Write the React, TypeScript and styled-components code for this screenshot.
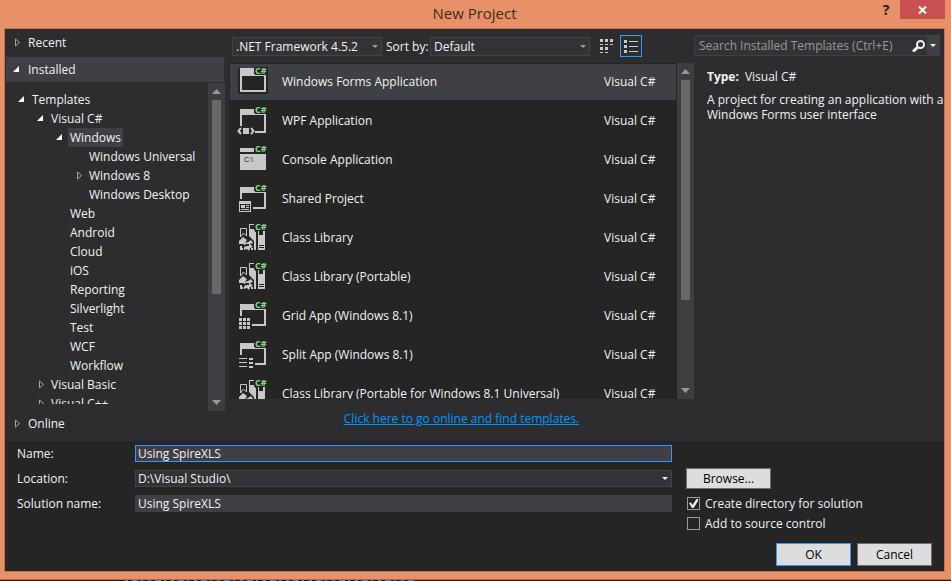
import React from "react";
import styled, { createGlobalStyle, css } from "styled-components";

const GlobalStyle = createGlobalStyle`
  *, *::before, *::after { box-sizing: border-box; }
  body { margin: 0; background: #1e1e1e; }
  body, button, input, select {
    font-family: "Open Sans", "Noto Sans", sans-serif;
    font-size: 12px;
    line-height: 15px;
    color: #f1f1f1;
  }
  button { margin: 0; padding: 0; border: 0; background: none; text-align: left; }
  svg { display: block; flex: none; }
`;

/* ---------- window frame ---------- */

const Screen = styled.div`
  display: flex;
  flex-direction: column;
  height: 100vh;
  min-height: 480px;
  min-width: 800px;
`;

const Frame = styled.main`
  flex: 1;
  min-height: 0;
  display: flex;
  flex-direction: column;
  padding: 0 6px 7px 4px;
  background: #e89168;
  border-bottom: 1px solid #b5694c;
`;

const TitleBar = styled.header`
  display: grid;
  grid-template-columns: 1fr auto 1fr;
  height: 28px;
`;

const Title = styled.h1`
  grid-column: 2;
  margin: 0;
  font-size: 15px;
  font-weight: 400;
  line-height: 27px;
  color: #3d2a21;
`;

const Caption = styled.div`
  display: flex;
  justify-content: flex-end;
`;

const HelpButton = styled.button`
  width: 28px;
  height: 19px;
  color: #1f1c1a;
  font-size: 14px;
  font-weight: 700;
  text-align: center;
`;

const CloseButton = styled.button`
  display: grid;
  place-items: center;
  width: 45px;
  height: 19px;
  background: #c75050;
`;

const Client = styled.div`
  flex: 1;
  min-height: 0;
  display: flex;
  flex-direction: column;
  border: 1px solid #bd7456;
  background: #2d2d30;
`;

const Workspace = styled.div`
  flex: 1;
  min-height: 0;
  display: grid;
  grid-template-columns: 220px minmax(0, 1fr) 250px;
  grid-template-rows: minmax(0, 1fr);
`;

/* ---------- scrollbar ---------- */

const Track = styled.div`
  flex: none;
  width: 17px;
  display: flex;
  flex-direction: column;
  align-items: center;
  gap: 6px;
  padding: 6px 0;
  background: #3e3e42;
`;

const ThumbLane = styled.div`
  flex: 1;
  width: 9px;
`;

const Thumb = styled.div<{ $size: number }>`
  height: ${(p) => p.$size}%;
  background: #686868;
`;

function ScrollBar({ size }: { size: number }) {
  return (
    <Track aria-hidden="true">
      <svg width="9" height="5"><path d="M0 5 4.500 0 9 5Z" fill="#999" /></svg>
      <ThumbLane><Thumb $size={size} /></ThumbLane>
      <svg width="9" height="5"><path d="M0 0 4.500 5 9 0Z" fill="#999" /></svg>
    </Track>
  );
}

/* ---------- sidebar ---------- */

const Sidebar = styled.nav`
  display: flex;
  flex-direction: column;
  min-height: 0;
  padding-bottom: 5px;
`;

const Section = styled.button<{ $active?: boolean }>`
  flex: none;
  display: flex;
  align-items: center;
  gap: 3px;
  height: ${(p) => (p.$active ? 25 : 28)}px;
  margin: 0 1px;
  padding: 0 0 ${(p) => (p.$active ? 0 : 1)}px 7px;
  background: ${(p) => (p.$active ? "#3f3f46" : "transparent")};
`;

const OnlineSection = styled(Section)`
  height: 25px;
  padding-bottom: 0;
`;

const TreePane = styled.div`
  flex: 1;
  min-height: 0;
  display: flex;
  margin-top: 1px;
`;

const TreeView = styled.ul`
  flex: 1;
  min-width: 0;
  margin: 0 0 7px;
  padding: 7px 0 0;
  list-style: none;
  overflow: hidden;
`;

const TreeItem = styled.li<{ $level: number }>`
  display: flex;
  align-items: center;
  height: 19px;
  padding-left: ${(p) => 13 + p.$level * 19}px;
`;

const TreeLabel = styled.button<{ $selected?: boolean }>`
  height: 19px;
  padding: 0 2px;
  white-space: nowrap;
  background: ${(p) => (p.$selected ? "#3f3f46" : "transparent")};
`;

const ArrowSlot = styled.span`
  flex: none;
  width: 12px;
`;

type Arrow = "open" | "closed" | undefined;

function Expander({ state }: { state: Arrow }) {
  return (
    <ArrowSlot>
      {state === "open" && (
        <svg width="12" height="9"><path d="M0 7H6V1Z" fill="#fff" /></svg>
      )}
      {state === "closed" && (
        <svg width="12" height="9">
          <path d="M2.500 1V8L6.500 4.500Z" fill="none" stroke="#a8a8a8" />
        </svg>
      )}
    </ArrowSlot>
  );
}

const tree: { text: string; level: number; arrow?: Arrow; selected?: boolean }[] = [
  { text: "Templates", level: 0, arrow: "open" },
  { text: "Visual C#", level: 1, arrow: "open" },
  { text: "Windows", level: 2, arrow: "open", selected: true },
  { text: "Windows Universal", level: 3 },
  { text: "Windows 8", level: 3, arrow: "closed" },
  { text: "Windows Desktop", level: 3 },
  { text: "Web", level: 2 },
  { text: "Android", level: 2 },
  { text: "Cloud", level: 2 },
  { text: "iOS", level: 2 },
  { text: "Reporting", level: 2 },
  { text: "Silverlight", level: 2 },
  { text: "Test", level: 2 },
  { text: "WCF", level: 2 },
  { text: "Workflow", level: 2 },
  { text: "Visual Basic", level: 1, arrow: "closed" },
  { text: "Visual C++", level: 1, arrow: "closed" },
];

/* ---------- template list ---------- */

const Center = styled.section`
  display: flex;
  flex-direction: column;
  min-height: 0;
  padding-left: 4px;
`;

const Toolbar = styled.div`
  flex: none;
  display: flex;
  align-items: center;
  height: 34px;
  padding-left: 3px;
`;

const SelectBox = styled.span<{ $width?: number }>`
  display: grid;
  align-items: center;
  width: ${(p) => (p.$width ? `${p.$width}px` : "100%")};
  & > * { grid-area: 1 / 1; }
  & > svg { justify-self: end; margin-right: 4px; pointer-events: none; }
`;

const Select = styled.select<{ $tall?: boolean }>`
  appearance: none;
  width: 100%;
  height: ${(p) => (p.$tall ? 19 : 17)}px;
  padding: 0 16px 0 ${(p) => (p.$tall ? 3 : 2)}px;
  border: 1px solid #434346;
  border-radius: 0;
  background: #333337;
`;

function Chevron({ color }: { color: string }) {
  return <svg width="6" height="3"><path d="M0 0H6L3 3Z" fill={color} /></svg>;
}

const SortLabel = styled.label`
  width: 44px;
  margin-left: 4px;
  white-space: nowrap;
`;

const ViewButtons = styled.div`
  display: flex;
  gap: 3px;
  margin-left: 5px;
`;

const ViewButton = styled.button<{ $active?: boolean }>`
  display: grid;
  place-items: center;
  width: 22px;
  height: 22px;
  border: 1px solid ${(p) => (p.$active ? "#3399ff" : "transparent")};
`;

const ListPane = styled.div`
  flex: 1;
  min-height: 0;
  display: flex;
`;

const List = styled.ul`
  flex: 1;
  min-width: 0;
  display: flex;
  flex-direction: column;
  gap: 3px;
  margin: 0;
  padding: 1px;
  list-style: none;
  overflow: hidden;
  background: #252526;
`;

const Row = styled.button<{ $selected?: boolean }>`
  display: grid;
  grid-template-columns: 30px minmax(0, 1fr) 72px;
  column-gap: 14px;
  align-items: center;
  width: 100%;
  height: 36px;
  padding: 0 0 2px 8px;
  background: ${(p) => (p.$selected ? "#3f3f46" : "transparent")};
  white-space: nowrap;
`;

const LinkBar = styled.div`
  flex: none;
  height: 42px;
  padding-top: 12px;
  text-align: center;
`;

const OnlineLink = styled.a`
  color: #0097fb;
  text-decoration: underline;
`;

const G = "#c8c8c8";
const D = "#252526";

type Kind = "forms" | "wpf" | "console" | "shared" | "library" | "grid" | "split";

function Glyph({ kind }: { kind: Kind }) {
  switch (kind) {
    case "forms":
      return (
        <>
          <path d="M0 1H17V0H30V27H0Z" fill={D} />
          <path d="M2 1H28V25H2ZM4 9V23H26V9Z" fill={G} fillRule="evenodd" />
        </>
      );
    case "wpf":
      return (
        <>
          <path d="M2 3H28V27H17V25H26V9H4V20H2Z" fill={G} />
          <path d="M5 22H11V28H5Z" fill={G} />
          <path
            d="M3 22 0.500 25 3 28M13 22 15.500 25 13 28"
            fill="none"
            stroke={G}
            strokeWidth="2"
            shapeRendering="geometricPrecision"
          />
        </>
      );
    case "console":
      return (
        <>
          <path d="M2 3H28V7H2ZM2 9H28V25H2Z" fill={G} />
          <text x="6" y="17" fontSize="7" fontFamily="Liberation Sans, sans-serif" fill="#111">C:\</text>
        </>
      );
    case "shared":
      return (
        <>
          <path d="M2 3H28V25H15V23H26V9H4V15H2Z" fill={G} />
          <path d="M1 17H13V28H1ZM2 20V27H12V20ZM3 21H7V24H3ZM8 21H11V22H8ZM8 23H11V24H8ZM3 25H11V26H3Z" fill={G} fillRule="evenodd" />
        </>
      );
    case "grid":
      return (
        <>
          <path d="M2 3H28V25H14V23H26V9H4V15H2Z" fill={G} />
          {[17, 21, 25].map((y) => (
            <path key={y} d={`M1 ${y}h3v3h-3ZM5 ${y}h3v3h-3ZM9 ${y}h3v3h-3Z`} fill={G} />
          ))}
        </>
      );
    case "split":
      return (
        <>
          <path d="M2 3H28V25H17V23H26V9H4V15H2Z" fill={G} />
          {[18, 22, 26].map((y) => (
            <path key={y} d={`M1 ${y}h8v1h-8ZM11 ${y}h4v2h-4Z`} fill={G} />
          ))}
        </>
      );
    case "library":
      return (
        <>
          <path d="M2.500 14V5.500H8.500V13L5.500 10Z" fill="none" stroke={G} />
          <path d="M11 1H17V2H12V6H17V9H18V27H16V18L11 13Z" fill={G} />
          <path d="M20 12H27V27H20ZM21 22V23H26V22ZM21 24V25H26V24Z" fill={G} fillRule="evenodd" />
          <path d="M20 8H21V12H20ZM25 8H27V12H25Z" fill={G} />
          <path d="M5 14 9 17 7 20 10 19 13 17 15 20 12 21 15 24 12 25 11 28 9 26 6 27 6 24 9 23 5 21 1 21 1 18Z" fill={G} />
          <path d="M7 21H11V23H8Z" fill={D} />
          <path d="M2 23H4V25H5V27H2ZM13 25H15V27H13Z" fill={G} />
        </>
      );
  }
}

function TemplateIcon({ kind }: { kind: Kind }) {
  return (
    <svg width="30" height="28" viewBox="0 0 30 28" shapeRendering={kind === "library" ? undefined : "crispEdges"} overflow="visible">
      <Glyph kind={kind} />
      <path d="M17 0H30V7H28V8H17L16 7V1Z" fill={D} />
      <text x="17" y="7" fontSize="9" fontWeight="700" fontFamily="Open Sans, sans-serif" fill="#86d986">C#</text>
    </svg>
  );
}

const templates: { name: string; kind: Kind }[] = [
  { name: "Windows Forms Application", kind: "forms" },
  { name: "WPF Application", kind: "wpf" },
  { name: "Console Application", kind: "console" },
  { name: "Shared Project", kind: "shared" },
  { name: "Class Library", kind: "library" },
  { name: "Class Library (Portable)", kind: "library" },
  { name: "Grid App (Windows 8.1)", kind: "grid" },
  { name: "Split App (Windows 8.1)", kind: "split" },
  { name: "Class Library (Portable for Windows 8.1 Universal)", kind: "library" },
];

/* ---------- details ---------- */

const Details = styled.aside`
  padding-top: 6px;
`;

const SearchBox = styled.div`
  display: flex;
  align-items: center;
  height: 21px;
  margin-right: 4px;
  border: 1px solid #3f3f46;
  background: #333337;
`;

const SearchInput = styled.input`
  flex: 1;
  min-width: 0;
  height: 19px;
  padding: 0 4px;
  border: 0;
  outline: 0;
  background: transparent;
  &::placeholder { color: #999; opacity: 1; }
`;

const SearchGo = styled.button`
  width: 15px;
`;

const SearchMenu = styled.button`
  display: grid;
  place-items: center;
  align-self: stretch;
  width: 12px;
  background: #3f3f46;
`;

const Info = styled.div`
  padding: 13px 0 0 13px;
  p { margin: 0 0 8px; }
  strong { margin-right: 6px; }
`;

/* ---------- form ---------- */

const Form = styled.form`
  flex: none;
  padding: 0 12px 5px;
  background: #252526;
`;

const Fields = styled.div`
  display: grid;
  grid-template-columns: 118px minmax(0, 1fr) 260px;
  grid-template-rows: 25px 25px 25px 15px;
  align-items: center;
`;

const FieldLabel = styled.label`
  grid-column: 1;
`;

const Side = styled.div<{ $row: number }>`
  grid-column: 3;
  grid-row: ${(p) => p.$row};
  padding-left: 14px;
`;

const fieldLook = css`
  width: 100%;
  height: 17px;
  padding: 0 2px;
  outline: 0;
  background: #3f3f46;
`;

const TextField = styled.input<{ $focused?: boolean }>`
  ${fieldLook}
  border: 1px solid ${(p) => (p.$focused ? "#3399ff" : "#3f3f46")};
`;

const PushButton = styled.button<{ $primary?: boolean; $wide?: boolean }>`
  display: block;
  width: ${(p) => (p.$wide ? 85 : 75)}px;
  height: ${(p) => (p.$wide ? 21 : 23)}px;
  border: 1px solid ${(p) => (p.$primary ? "#3399ff" : "#707070")};
  background: #dddddd;
  color: #000;
  line-height: 19px;
  text-align: center;
`;

const CheckLabel = styled.label`
  display: flex;
  align-items: center;
  gap: 5px;
  margin-left: 1px;
`;

const CheckCell = styled.span`
  display: grid;
  place-items: center;
  & > * { grid-area: 1 / 1; }
  & > svg { pointer-events: none; visibility: hidden; }
  & > input:checked + svg { visibility: visible; }
`;

const CheckInput = styled.input`
  appearance: none;
  width: 13px;
  height: 13px;
  margin: 0;
  border: 1px solid #999;
  background: #252526;
`;

function Check({ label, on }: { label: string; on?: boolean }) {
  return (
    <CheckLabel>
      <CheckCell>
        <CheckInput type="checkbox" defaultChecked={on} />
        <svg width="9" height="9"><path d="M0 4 2 3.500 3.500 6 7.500 0H9V2L4.500 9H3Z" fill="#f1f1f1" /></svg>
      </CheckCell>
      {label}
    </CheckLabel>
  );
}

const Actions = styled.div`
  display: flex;
  justify-content: flex-end;
  gap: 6px;
  margin-top: 12px;
`;

const DesktopEdge = styled.div`
  flex: none;
  height: 1px;
  padding-left: 125px;
  background: #1e1e1e;
`;

export default function App() {
  return (
    <Screen>
      <GlobalStyle />
      <Frame>
        <TitleBar>
          <Title>New Project</Title>
          <Caption>
            <HelpButton type="button" aria-label="Help">?</HelpButton>
            <CloseButton type="button" aria-label="Close">
              <svg width="9" height="8"><path d="M1 0.500 8 7.500M8 0.500 1 7.500" stroke="#fff" strokeWidth="2" /></svg>
            </CloseButton>
          </Caption>
        </TitleBar>
        <Client>
          <Workspace>
            <Sidebar>
              <Section type="button"><Expander state="closed" />Recent</Section>
              <Section type="button" $active><Expander state="open" />Installed</Section>
              <TreePane>
                <TreeView>
                  {tree.map((t) => (
                    <TreeItem key={t.text} $level={t.level}>
                      <Expander state={t.arrow} />
                      <TreeLabel type="button" $selected={t.selected}>{t.text}</TreeLabel>
                    </TreeItem>
                  ))}
                </TreeView>
                <ScrollBar size={66} />
              </TreePane>
              <OnlineSection type="button"><Expander state="closed" />Online</OnlineSection>
            </Sidebar>

            <Center>
              <Toolbar>
                <SelectBox $width={150}>
                  <Select $tall aria-label="Framework"><option>.NET Framework 4.5.2</option></Select>
                  <Chevron color="#999" />
                </SelectBox>
                <SortLabel htmlFor="sort">Sort by:</SortLabel>
                <SelectBox $width={160}>
                  <Select $tall id="sort"><option>Default</option></Select>
                  <Chevron color="#999" />
                </SelectBox>
                <ViewButtons>
                  <ViewButton type="button" aria-label="Small icons">
                    <svg width="13" height="14" shapeRendering="crispEdges">
                      <path d="M0 0h3v3H0ZM5 0h3v3H5ZM10 0h3v3h-3ZM0 5h3v1H0ZM5 5h3v1H5ZM10 5h3v1h-3ZM0 8h3v3H0ZM5 8h3v3H5ZM0 13h3v1H0ZM5 13h3v1H5Z" fill={G} />
                    </svg>
                  </ViewButton>
                  <ViewButton type="button" aria-label="List" $active>
                    <svg width="14" height="13" shapeRendering="crispEdges">
                      <path d="M0 0h3v3H0ZM5 1h9v1H5ZM0 5h3v3H0ZM5 6h9v1H5ZM0 10h3v3H0ZM5 11h9v1H5Z" fill={G} />
                    </svg>
                  </ViewButton>
                </ViewButtons>
              </Toolbar>
              <ListPane>
                <List>
                  {templates.map((t, i) => (
                    <li key={t.name}>
                      <Row type="button" $selected={i === 0}>
                        <TemplateIcon kind={t.kind} />
                        <span>{t.name}</span>
                        <span>Visual C#</span>
                      </Row>
                    </li>
                  ))}
                </List>
                <ScrollBar size={73} />
              </ListPane>
              <LinkBar>
                <OnlineLink href="#online">Click here to go online and find templates.</OnlineLink>
              </LinkBar>
            </Center>

            <Details>
              <SearchBox>
                <SearchInput type="text" aria-label="Search" placeholder="Search Installed Templates (Ctrl+E)" />
                <SearchGo type="button" aria-label="Search">
                  <svg width="13" height="12">
                    <circle cx="8.500" cy="4.500" r="3.500" fill="none" stroke="#f1f1f1" strokeWidth="2" />
                    <path d="M6 7 1 11.500" stroke="#f1f1f1" strokeWidth="3" />
                  </svg>
                </SearchGo>
                <SearchMenu type="button" aria-label="Search options"><Chevron color="#f1f1f1" /></SearchMenu>
              </SearchBox>
              <Info>
                <p><strong>Type:</strong>Visual C#</p>
                <p>A project for creating an application with a Windows Forms user interface</p>
              </Info>
            </Details>
          </Workspace>

          <Form onSubmit={(e) => e.preventDefault()}>
            <Fields>
              <FieldLabel htmlFor="name">Name:</FieldLabel>
              <TextField id="name" type="text" defaultValue="Using SpireXLS" $focused />
              <FieldLabel htmlFor="location">Location:</FieldLabel>
              <SelectBox>
                <Select id="location"><option>D:\Visual Studio\</option></Select>
                <Chevron color="#f1f1f1" />
              </SelectBox>
              <Side $row={2}><PushButton type="button" $wide>Browse...</PushButton></Side>
              <FieldLabel htmlFor="solution">Solution name:</FieldLabel>
              <TextField id="solution" type="text" defaultValue="Using SpireXLS" />
              <Side $row={3}><Check label="Create directory for solution" on /></Side>
              <Side $row={4}><Check label="Add to source control" /></Side>
            </Fields>
            <Actions>
              <PushButton type="submit" $primary>OK</PushButton>
              <PushButton type="button">Cancel</PushButton>
            </Actions>
          </Form>
        </Client>
      </Frame>
      <DesktopEdge aria-hidden="true">
        <svg width="290" height="1"><path d="M0 0.500H290" stroke="#2f86c4" strokeDasharray="3 4 6 3 2 5" /></svg>
      </DesktopEdge>
    </Screen>
  );
}
